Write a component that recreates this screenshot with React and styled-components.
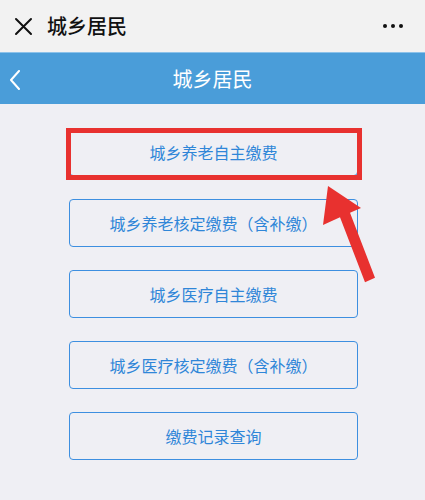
import React from "react";
import styled, { createGlobalStyle } from "styled-components";

const Global = createGlobalStyle`
  html, body { margin: 0; padding: 0; background: #efeff4; }
  body { font-family: "Noto Sans CJK SC", "Noto Sans", sans-serif; }
`;

const Page = styled.div`
  position: relative;
  width: 425px;
  height: 500px;
  overflow: hidden;
  background: #efeff4;
`;

const TopBar = styled.div`
  height: 52px;
  background: #f2f2f2;
  display: flex;
  align-items: center;
  padding: 0 22px 0 14px;
  box-sizing: border-box;
`;

const TopTitle = styled.div`
  font-size: 20px;
  font-weight: 500;
  color: #111;
  margin-left: 14px;
  flex: 1;
  line-height: 1;
`;

const Dots = styled.div`
  display: flex;
  gap: 4px;
  span {
    width: 4px;
    height: 4px;
    border-radius: 50%;
    background: #111;
  }
`;

const NavBar = styled.div`
  height: 52px;
  background: #4a9dd9;
  border-top: 1px solid #8cc2ea;
  box-sizing: border-box;
  display: flex;
  align-items: center;
  justify-content: center;
  position: relative;
`;

const NavTitle = styled.div`
  color: #fff;
  font-size: 20px;
  line-height: 1;
`;

const Back = styled.div`
  position: absolute;
  left: 9px;
  top: 17px;
  display: flex;
`;

const List = styled.div`
  display: flex;
  flex-direction: column;
  gap: 23px;
  padding: 24px 0 0 69px;
`;

const ButtonWrap = styled.div`
  position: relative;
  width: 289px;
`;

const Btn = styled.div`
  height: 48px;
  box-sizing: border-box;
  border: 1.5px solid #3d8fe0;
  border-radius: 4px;
  display: flex;
  align-items: center;
  justify-content: center;
  color: #2f86d8;
  font-size: 16px;
  background: transparent;
`;

const Highlight = styled.div`
  position: absolute;
  left: -3px;
  right: -4px;
  top: 0;
  bottom: -4px;
  border: 5px solid #e8312f;
  pointer-events: none;
`;

const Arrow = styled.svg`
  position: absolute;
  left: 0;
  top: 0;
  pointer-events: none;
`;

const items = [
  "城乡养老自主缴费",
  "城乡养老核定缴费（含补缴）",
  "城乡医疗自主缴费",
  "城乡医疗核定缴费（含补缴）",
  "缴费记录查询",
];

export default function App() {
  return (
    <Page>
      <Global />
      <TopBar>
        <svg width="19" height="19" viewBox="0 0 19 19">
          <path d="M2 2 L17 17 M17 2 L2 17" stroke="#111" strokeWidth="2" strokeLinecap="round" />
        </svg>
        <TopTitle>城乡居民</TopTitle>
        <Dots>
          <span />
          <span />
          <span />
        </Dots>
      </TopBar>
      <NavBar>
        <Back>
          <svg width="14" height="20" viewBox="0 0 14 20">
            <path d="M10 1 L2 10 L10 19" stroke="#fff" strokeWidth="2" fill="none" strokeLinecap="round" strokeLinejoin="round" />
          </svg>
        </Back>
        <NavTitle>城乡居民</NavTitle>
      </NavBar>
      <List>
        {items.map((t, i) => (
          <ButtonWrap key={t}>
            <Btn>{t}</Btn>
            {i === 0 && <Highlight />}
          </ButtonWrap>
        ))}
      </List>
      <Arrow width="425" height="500" viewBox="0 0 425 500">
        <polygon
          points="328,186 361,208 350,212.8 375,277.8 365,282.2 340,217.2 323,225"
          fill="#e8312f"
        />
      </Arrow>
    </Page>
  );
}
